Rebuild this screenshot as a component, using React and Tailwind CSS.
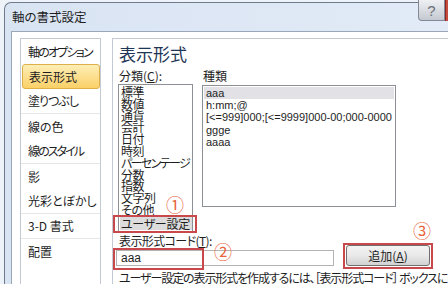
import React from "react";

const jp = "font-['Noto_Sans_CJK_JP','Noto_Sans',sans-serif] [font-feature-settings:'palt']";
const lat = "font-['Liberation_Sans',Arial,sans-serif]";

const nav = [
  { t: "軸のオプション", tr: "tracking-[-1.8px]" },
  { t: "表示形式", sel: true, tr: "" },
  { t: "塗りつぶし", sep: true, tr: "tracking-[-1px]" },
  { t: "線の色", tr: "" },
  { t: "線のスタイル", sep: true, tr: "tracking-[-1.9px]" },
  { t: "影", tr: "" },
  { t: "光彩とぼかし", sep: true, tr: "" },
  { t: "3-D 書式", sep: true, tr: "" },
  { t: "配置", tr: "" },
];

const cats = [
  { t: "標準", tr: "tracking-[-0.5px]" },
  { t: "数値", tr: "tracking-[-0.5px]" },
  { t: "通貨", tr: "tracking-[-0.5px]" },
  { t: "会計", tr: "tracking-[-0.5px]" },
  { t: "日付", tr: "tracking-[-0.5px]" },
  { t: "時刻", tr: "tracking-[-0.5px]" },
  { t: "パーセンテージ", tr: "tracking-[-1.6px]" },
  { t: "分数", tr: "tracking-[-0.5px]" },
  { t: "指数", tr: "tracking-[-0.5px]" },
  { t: "文字列", tr: "tracking-[-0.5px]" },
  { t: "その他", tr: "tracking-[-0.5px]" },
];
const kinds = ["aaa", "h:mm;@", "[<=999]000;[<=9999]000-00;000-0000", "ggge", "aaaa"];

export default function App() {
  return (
    <div className={`relative w-[448px] h-[284px] overflow-hidden bg-[#eef3f9] text-[#1e1e1e] ${jp}`}>
      <div className="ml-[4px] mt-[2px] w-[460px] h-[300px] flex flex-col border-l border-t border-[#6f7b8b] rounded-tl-[7px] bg-gradient-to-r from-[#d9e4f3] to-[#e2ebf7]">
        {/* title bar */}
        <div className="h-[28px] shrink-0 flex items-center pl-[7px] pb-[1px]">
          <span className="text-[12.5px] leading-[16px] text-[#1e1e1e]">軸の書式設定</span>
        </div>
        {/* body */}
        <div className="flex-1 ml-[6px] border-l border-t border-[#9aa7b8] bg-white pl-[8px] pt-[6px] flex">
          {/* nav */}
          <div className="w-[81px] shrink-0 h-[260px] border border-[#c3cad3] bg-white flex flex-col">
            {nav.map((n, i) =>
              n.sel ? (
                <div
                  key={i}
                  className="h-[25px] shrink-0 ml-[1px] pl-[6px] flex items-center whitespace-nowrap rounded-[3px] border border-[#deb04a] bg-gradient-to-b from-[#fdeeb5] to-[#fbd066] text-[12px] text-[#1e1e1e]"
                >
                  {n.t}
                </div>
              ) : (
                <div
                  key={i}
                  className={`h-[25px] shrink-0 pl-[7px] flex items-center whitespace-nowrap text-[12px] text-[#1e1e1e] ${n.tr} ${n.sep ? "border-b border-[#e6e6e6]" : ""}`}
                >
                  {n.t}
                </div>
              )
            )}
          </div>
          {/* main panel */}
          <div className="ml-[11px] flex-1 min-w-0 overflow-hidden border-l border-t border-[#c3cad3] pl-[6px] flex flex-col">
            <div className="mt-[5px] h-[20px] text-[17px] leading-[20px] text-[#1f3556]">表示形式</div>
            <div className="mt-[4px] flex">
              <div className="w-[84px] shrink-0 flex flex-col">
                <div className="h-[16px] text-[12px] leading-[16px]">
                  分類(<span className="underline underline-offset-1">C</span>):
                </div>
                <div className="-ml-px w-[75px] h-[148px] border border-[#8c9096] bg-white pt-[1px] pl-[2px] overflow-hidden">
                  {cats.map((c) => (
                    <div key={c.t} className={`h-[11.8px] text-[12px] leading-[11.8px] whitespace-nowrap ${c.tr}`}>
                      {c.t}
                    </div>
                  ))}
                  <div className="mt-[1px] -ml-[1px] h-[13px] bg-[#dcdcdc] pl-[1px] text-[12px] leading-[13px] whitespace-nowrap tracking-[-0.3px]">
                    ユーザー設定
                  </div>
                </div>
              </div>
              <div className="flex flex-col shrink-0">
                <div className="h-[16px] text-[12px] leading-[16px]">種類</div>
                <div className="-ml-px mt-[1px] w-[194px] h-[122px] border border-[#8c9096] bg-white pt-px px-px">
                  {kinds.map((k, i) => (
                    <div
                      key={k}
                      className={`h-[12.2px] pl-[2px] text-[11px] leading-[12.2px] whitespace-nowrap ${lat} ${i === 0 ? "bg-[#e1e1e6]" : ""}`}
                    >
                      {k}
                    </div>
                  ))}
                </div>
              </div>
            </div>
            {/* lower section */}
            <div className="mt-[2px] flex items-end">
              <div className="w-[215px] shrink-0 flex flex-col">
                <div className="h-[14px] text-[12px] leading-[14px] whitespace-nowrap tracking-[-0.6px]">
                  表示形式コード(<span className="underline underline-offset-1">T</span>):
                </div>
                <div className={`mt-[2px] -ml-[3px] w-[218px] h-[16px] border border-[#b3b3b3] bg-white pl-[4px] text-[12px] leading-[14px] ${lat}`}>
                  aaa
                </div>
              </div>
              <div className="ml-[12px] shrink-0 w-[84px] h-[21px] rounded-[3px] border border-[#707070] bg-gradient-to-b from-[#f4f4f4] via-[#e9e9e9] to-[#d2d2d2] flex items-center justify-center text-[12px] leading-[14px]">
                追加(<span className="underline underline-offset-1">A</span>)
              </div>
            </div>
            <div className="mt-[4px] h-[16px] text-[12px] leading-[16px] whitespace-nowrap tracking-[-1.1px]">
              ユーザー設定の表示形式を作成するには、［表示形式コード］ ボックスに
            </div>
          </div>
        </div>
      </div>

      {/* caption buttons */}
      <div className="absolute left-[418px] top-0 w-[27px] h-[21px] rounded-bl-[4px] border border-t-0 border-[#838a95] bg-gradient-to-b from-[#eef0f3] to-[#c4c9d1] flex items-center justify-center">
        <span className={`text-[15px] leading-none text-[#6b6f76] ${lat}`}>?</span>
      </div>
      <div className="absolute left-[445px] top-0 w-[10px] h-[21px] bg-[#c44b3d] border-l border-[#8c2a22]" />

      {/* annotations */}
      <div className="absolute left-[113px] top-[215px] w-[84px] h-[18px] border-2 border-[#c8484b]" />
      <div className="absolute left-[113px] top-[248px] w-[91px] h-[22px] border-2 border-[#c8484b]" />
      <div className="absolute left-[343px] top-[243px] w-[90px] h-[26px] border-2 border-[#c8484b]" />
      <span className="absolute left-[166px] top-[195px] text-[18px] leading-none text-[#e8643c]">①</span>
      <span className="absolute left-[214px] top-[242px] text-[18px] leading-none text-[#e8643c]">②</span>
      <span className="absolute left-[413px] top-[221px] text-[18px] leading-none text-[#e8643c]">③</span>
    </div>
  );
}
